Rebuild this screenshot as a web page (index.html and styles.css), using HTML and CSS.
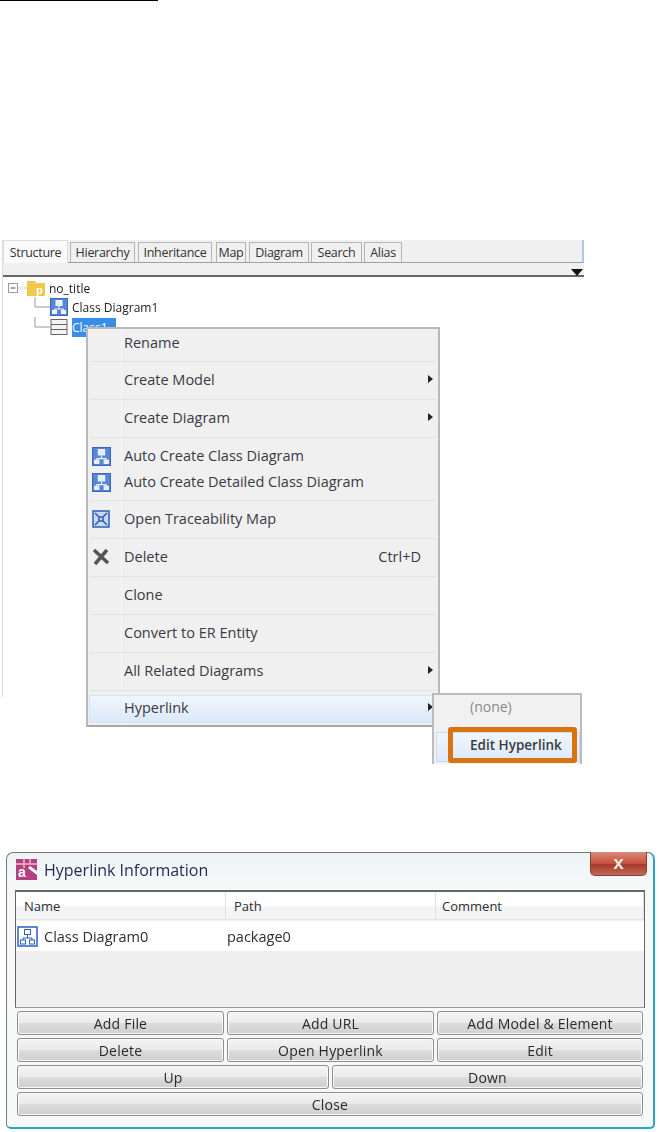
FILE: index.html
```html
<!DOCTYPE html>
<html lang="en">
<head>
<meta charset="utf-8">
<title>Hyperlink</title>
<link rel="stylesheet" href="styles.css">
</head>
<body>
<svg class="defs" width="0" height="0" aria-hidden="true">
  <defs>
    <symbol id="diagram" viewBox="0 0 18 18">
      <rect x=".5" y=".5" width="17" height="17" fill="#5a86d6" stroke="#3a66c0"/>
      <rect x="6" y="2.500" width="6" height="5" fill="#e6edfb" stroke="#f4f7fd"/>
      <path d="M9 8v3M4.500 11h9M4.500 11v1.500M13.500 11v1.500" fill="none" stroke="#f4f7fd"/>
      <rect x="2.500" y="12.500" width="4" height="3" fill="#e6edfb" stroke="#f4f7fd"/>
      <rect x="11.500" y="12.500" width="4" height="3" fill="#e6edfb" stroke="#f4f7fd"/>
    </symbol>
    <symbol id="diagram-light" viewBox="0 0 21 21">
      <rect x="1" y="1" width="19" height="19" fill="#fff" stroke="#2d5fc4" stroke-width="1.500"/>
      <rect x="7.500" y="3.500" width="6" height="5" fill="none" stroke="#2d5fc4"/>
      <path d="M10.500 8.500v3.500M6 12h9M6 12v2M15 12v2" fill="none" stroke="#2d5fc4"/>
      <rect x="3.500" y="14" width="5" height="4" fill="none" stroke="#2d5fc4"/>
      <rect x="12.500" y="14" width="5" height="4" fill="none" stroke="#2d5fc4"/>
    </symbol>
  </defs>
</svg>

<hr class="top-rule">

<section class="panel">
  <div class="tabs">
    <span class="tab tab-active tab-structure">Structure</span>
    <span class="tab tab-hierarchy">Hierarchy</span>
    <span class="tab tab-inheritance">Inheritance</span>
    <span class="tab tab-map">Map</span>
    <span class="tab tab-diagram">Diagram</span>
    <span class="tab tab-search">Search</span>
    <span class="tab tab-alias">Alias</span>
  </div>
  <div class="subbar"><span class="subbar-arrow"></span></div>

  <div class="tree">
    <div class="tree-row tree-root">
      <svg class="tree-art-root" width="46" height="17" viewBox="0 0 46 17">
        <rect x="5.500" y="3.500" width="9" height="9" fill="#fff" stroke="#9a9a9a"/>
        <path d="M7.500 8h5" stroke="#555"/>
        <path d="M15 8h10" stroke="#aaa" stroke-dasharray="1 1"/>
        <path d="M24 1h8l1 2h9v13H24z" fill="#f2c84a"/>
        <text x="33" y="14" class="folder-letter">p</text>
      </svg>
      <span class="tree-label">no_title</span>
    </div>
    <div class="tree-row tree-child">
      <svg class="tree-lines" width="16" height="20" viewBox="0 0 16 20"><path d="M1 0v10h15" fill="none" stroke="#999"/></svg>
      <svg class="tree-icon" width="18" height="18"><use href="#diagram"/></svg>
      <span class="tree-label tree-label-child">Class Diagram1</span>
    </div>
    <div class="tree-row tree-child">
      <svg class="tree-lines" width="16" height="20" viewBox="0 0 16 20"><path d="M1 0v10h15" fill="none" stroke="#999"/></svg>
      <svg class="tree-icon" width="18" height="18" viewBox="0 0 18 18">
        <rect x="1" y="1.500" width="16" height="15" fill="#f4f4f4" stroke="#666"/>
        <path d="M1 6.500h16M1 11.500h16" stroke="#666"/>
      </svg>
      <span class="tree-label tree-selected">Class1</span>
    </div>
  </div>

  <div class="menu">
    <div class="menu-item menu-first"><span class="menu-text">Rename</span></div>
    <div class="menu-item"><span class="menu-text">Create Model</span><span class="chev"></span></div>
    <div class="menu-item"><span class="menu-text">Create Diagram</span><span class="chev"></span></div>
    <div class="menu-group">
      <div class="menu-line">
        <svg class="menu-icon" width="19" height="19"><use href="#diagram"/></svg>
        <span class="menu-text">Auto Create Class Diagram</span>
      </div>
      <div class="menu-line">
        <svg class="menu-icon" width="19" height="19"><use href="#diagram"/></svg>
        <span class="menu-text">Auto Create Detailed Class Diagram</span>
      </div>
    </div>
    <div class="menu-item">
      <svg class="menu-icon" width="18" height="18" viewBox="0 0 18 18">
        <rect x="1" y="1" width="16" height="16" fill="#c9d9f4" stroke="#2b5fb8" stroke-width="1.500"/>
        <path d="M3 3l4 4h4l4-4M3 15l4-4h4l4 4M7 7v4M11 7v4" fill="none" stroke="#2b5fb8" stroke-width="1.600"/>
      </svg>
      <span class="menu-text">Open Traceability Map</span>
    </div>
    <div class="menu-item">
      <svg class="menu-icon" width="18" height="18" viewBox="0 0 18 18">
        <path d="M2 2l14 13M15 2L3 16" fill="none" stroke="#555" stroke-width="3.500"/>
      </svg>
      <span class="menu-text">Delete</span><span class="shortcut">Ctrl+D</span>
    </div>
    <div class="menu-item"><span class="menu-text">Clone</span></div>
    <div class="menu-item"><span class="menu-text">Convert to ER Entity</span></div>
    <div class="menu-item"><span class="menu-text">All Related Diagrams</span><span class="chev"></span></div>
    <div class="menu-hover"><span class="menu-text">Hyperlink</span><span class="chev"></span></div>
  </div>

  <div class="submenu">
    <div class="sub-none">(none)</div>
    <div class="sub-edit"><span class="sub-edit-text">Edit Hyperlink</span></div>
  </div>
  <div class="callout"></div>
</section>

<section class="dialog">
  <header class="titlebar">
    <svg class="app-icon" width="21" height="21" viewBox="0 0 21 21">
      <rect width="21" height="21" fill="#b3407f"/>
      <path d="M0 5h21M8 0v9M14 0v5" stroke="#f2b8cf" stroke-width="1.500"/>
      <path d="M12 9l9 7v-4l-7-5z" fill="#fff"/>
      <text x="2" y="18" class="app-letter">a</text>
    </svg>
    <span class="title">Hyperlink Information</span>
    <span class="close"><span class="close-x">x</span></span>
  </header>
  <div class="table">
    <div class="thead">
      <span class="th th-name">Name</span>
      <span class="th th-path">Path</span>
      <span class="th th-comment">Comment</span>
    </div>
    <div class="tr">
      <span class="td td-name">
        <svg width="21" height="21"><use href="#diagram-light"/></svg>
        Class Diagram0
      </span>
      <span class="td td-path">package0</span>
    </div>
    <div class="tfill"></div>
  </div>
  <div class="btn-row btn-row-3">
    <button class="btn">Add File</button>
    <button class="btn">Add URL</button>
    <button class="btn">Add Model &amp; Element</button>
  </div>
  <div class="btn-row btn-row-3">
    <button class="btn">Delete</button>
    <button class="btn">Open Hyperlink</button>
    <button class="btn">Edit</button>
  </div>
  <div class="btn-row btn-row-2">
    <button class="btn">Up</button>
    <button class="btn">Down</button>
  </div>
  <div class="btn-row btn-row-1">
    <button class="btn">Close</button>
  </div>
</section>
</body>
</html>
```
FILE: styles.css
```css
* { box-sizing: border-box; }
html, body { margin: 0; padding: 0; background: #fff; }
body {
  width: 659px;
  height: 1132px;
  overflow: hidden;
  font-family: "Open Sans", "Noto Sans", sans-serif;
  color: #333;
}
.defs { position: absolute; }
.top-rule {
  width: 158px;
  height: 1px;
  margin: 0;
  border: 0;
  background: #000;
}

/* Structure panel */
.panel {
  position: relative;
  width: 582px;
  height: 457px;
  margin: 239px 0 0 2px;
  border-left: 1px solid #ddd;
  filter: blur(.4px);
}
.tabs {
  display: flex;
  align-items: flex-end;
  height: 23px;
  background: #f0f0f0;
  border-right: 2px solid #a9c8ec;
  border-bottom: 1px solid #a0a0a0;
  font-size: 12.500px;
}
.tab {
  display: flex;
  align-items: center;
  justify-content: center;
  height: 20px;
  margin-left: 2px;
  background: #f0f0f0;
  border: 1px solid #b5b5b5;
  border-bottom: 0;
  color: #333;
  letter-spacing: -.3px;
}
.tab-active {
  height: 23px;
  margin: 0 0 -1px;
  background: #fafafa;
  border-color: #ddd;
}
.tab-structure { width: 65px; }
.tab-hierarchy { width: 65px; }
.tab-inheritance { width: 74px; margin-left: 3px; }
.tab-map { width: 30px; margin-left: 4px; }
.tab-diagram { width: 60px; margin-left: 3px; }
.tab-search { width: 51px; }
.tab-alias { width: 38px; }
.subbar {
  display: flex;
  justify-content: flex-end;
  align-items: flex-end;
  height: 14px;
  background: #f0f0f0;
  border-bottom: 2px solid #666;
  padding-right: 1px;
}
.subbar-arrow {
  width: 0;
  height: 0;
  border-left: 6px solid transparent;
  border-right: 6px solid transparent;
  border-top: 7px solid #111;
  margin-bottom: -1px;
}

/* Tree */
.tree { padding: 3px 0 0 3px; font-size: 12px; }
.tree-row { display: flex; align-items: center; }
.tree-root { height: 17px; }
.tree-child { height: 20px; padding-left: 25px; }
.tree-art-root { flex: none; margin-left: -3px; }
.folder-letter { font-size: 11px; font-family: "Liberation Sans", sans-serif; fill: #fff; font-weight: 700; }
.tree-lines { flex: none; margin-left: 3px; }
.tree-icon { flex: none; margin-left: 0; }
.tree-label { color: #222; margin-left: 0; }
.tree-label-child { margin-left: 4px; }
.tree-selected {
  margin-left: 4px;
  width: 44px;
  height: 19px;
  line-height: 19px;
  background: #3a8ee8;
  color: #fff;
}

/* Context menu */
.menu {
  position: absolute;
  left: 83px;
  top: 87px;
  width: 354px;
  height: 400px;
  padding: 0 2px;
  background: linear-gradient(90deg, #f0f0f0 32px, #e6e6e6 32px, #fbfbfb 33px, #f0f0f0 34px);
  border: 2px solid #b9b9b9;
  border-bottom-color: #a8a8a8;
  font-size: 14.500px;
  color: #3a3a44;
}
.menu-item, .menu-group, .menu-hover, .menu-line { position: relative; }
.menu-item {
  display: flex;
  align-items: center;
  height: 38px;
  padding: 0 3px 3px 34px;
  border-bottom: 1px solid #e3e3e3;
}
.menu-first { height: 33px; padding-bottom: 6px; }
.menu-group {
  height: 63px;
  padding-top: 4px;
  border-bottom: 1px solid #e3e3e3;
}
.menu-line {
  display: flex;
  align-items: center;
  height: 26px;
  padding-left: 34px;
}
.menu-icon {
  position: absolute;
  left: 2px;
  top: 50%;
  margin-top: -8px;
}
.menu-item .menu-icon { margin-top: -10px; }
.menu-text { white-space: nowrap; }
.shortcut { margin-left: auto; margin-right: 12px; }
.chev {
  width: 0;
  height: 0;
  margin-left: auto;
  border-top: 4px solid transparent;
  border-bottom: 4px solid transparent;
  border-left: 5px solid #222;
}
.menu-hover {
  display: flex;
  align-items: center;
  height: 28px;
  margin: 4px -1px 0;
  padding: 0 3px 4px 34px;
  background: linear-gradient(#f0f6fd, #dbe9f9);
  border: 1px solid #d3e3f5;
  border-radius: 2px;
}

/* Submenu */
.submenu {
  position: absolute;
  left: 429px;
  top: 453px;
  width: 150px;
  height: 71px;
  background: #f1f1f1;
  border: 2px solid #bcbcbc;
  border-bottom: 0;
  font-size: 14px;
}
.sub-none {
  height: 29px;
  padding: 2px 0 0 36px;
  color: #8a8a8a;
}
.sub-edit {
  height: 30px;
  margin: 8px 0 0 2px;
  padding: 2px 0 0 33px;
  background: linear-gradient(#f0f6fd, #dbe9f9);
  border: 1px solid #c8dcf2;
  font-weight: 600;
  color: #3a3a44;
}
.sub-edit-text { font-size: 13.500px; white-space: nowrap; }
.callout {
  position: absolute;
  left: 445px;
  top: 487px;
  width: 129px;
  height: 36px;
  border: 5px solid #d9730f;
  border-radius: 3px;
}

/* Dialog */
.dialog {
  width: 649px;
  height: 277px;
  margin: 155px 0 0 6px;
  padding: 0 9px;
  background: linear-gradient(180deg, #eef3f5 0, #f6f9fa 36px);
  border: 1px solid #777;
  border-right: 2px solid #2aa4c4;
  border-bottom: 2px solid #2aa4c4;
  border-radius: 7px 7px 5px 5px;
  filter: blur(.4px);
}
.titlebar {
  position: relative;
  display: flex;
  align-items: center;
  height: 37px;
  padding-bottom: 4px;
}
.app-icon { flex: none; }
.app-letter { font: 700 14px "Liberation Sans", sans-serif; fill: #fff; }
.title {
  margin-left: 7px;
  font-size: 16px;
  color: #1f2a52;
}
.close {
  position: absolute;
  right: -3px;
  top: -1px;
  display: flex;
  align-items: center;
  justify-content: center;
  width: 57px;
  height: 24px;
  background: linear-gradient(#d98a7a, #c8503c 50%, #a83a28 55%, #bf6a58);
  border: 1px solid #8a4034;
  border-top: 0;
  border-radius: 0 0 5px 5px;
}
.close-x {
  font: 700 19px/19px "Liberation Sans", sans-serif;
  color: #f2ece4;
  margin-top: -3px;
}
.table {
  height: 118px;
  margin: 0 -1px 0 -1px;
  background: #efefef;
  border: 1px solid #666;
  border-bottom-color: #999;
  border-top-width: 2px;
  font-size: 13px;
  color: #2e2e2e;
}
.thead {
  display: grid;
  grid-template-columns: 210px 210px 1fr;
  height: 28px;
  background: linear-gradient(#fff 50%, #f2f4f5 55%);
  border-bottom: 1px solid #e3e3e3;
}
.th {
  display: flex;
  align-items: center;
  padding-left: 8px;
  border-right: 1px solid #e0e0e0;
}
.th-comment { padding-left: 6px; }
.tr {
  display: grid;
  grid-template-columns: 210px 1fr;
  height: 30px;
  margin-top: 1px;
  background: #fff;
  font-size: 14.500px;
}
.td { display: flex; align-items: center; }
.td-name { gap: 6px; padding-left: 1px; }
.td-path { padding-left: 1px; }
.tfill { height: 57px; }
.btn-row {
  display: grid;
  gap: 3px;
  height: 24px;
  margin: 3px 1px 0;
}
.btn-row-3 { grid-template-columns: 207px 207px 1fr; }
.btn-row-2 { grid-template-columns: 312px 1fr; }
.btn-row-1 { grid-template-columns: 1fr; }
.btn {
  padding: 0;
  font-family: inherit;
  font-size: 14px;
  letter-spacing: .2px;
  color: #2a2a2a;
  background: linear-gradient(#f3f3f3 0, #ebebeb 48%, #dcdcdc 52%, #cfcfcf 100%);
  border: 1px solid #8e8e8e;
  border-radius: 3px;
  box-shadow: inset 0 0 0 1px #f8f8f8;
}
```
